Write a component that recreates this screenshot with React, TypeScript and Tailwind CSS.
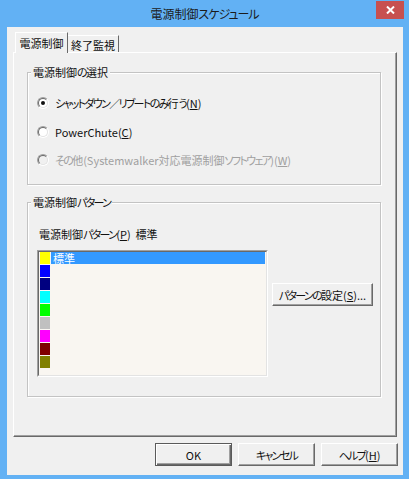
import React from "react";

function J({ t }: { t: string }) {
  const parts = t.split(/([\u3040-\u30ff\uff0f]+)/);
  return (
    <>
      {parts.map((p, i) =>
        p === "" ? null : /[\u3040-\u30ff\uff0f]/.test(p) ? (
          <span key={i} className="tracking-[-1.7px]">
            {p}
          </span>
        ) : (
          <React.Fragment key={i}>{p}</React.Fragment>
        )
      )}
    </>
  );
}

function U({ c }: { c: string }) {
  return <span className="underline underline-offset-[1px]">{c}</span>;
}

function Radio({ checked, disabled }: { checked?: boolean; disabled?: boolean }) {
  return (
    <div className="w-[12px] h-[12px] rounded-full border border-t-[#a0a0a0] border-l-[#a0a0a0] border-r-white border-b-white shrink-0">
      <div
        className={
          "w-full h-full rounded-full border border-t-[#696969] border-l-[#696969] border-r-[#e3e3e3] border-b-[#e3e3e3] flex items-center justify-center " +
          (disabled ? "bg-[#f0f0f0]" : "bg-white")
        }
      >
        {checked ? <div className="w-[4px] h-[4px] rounded-full bg-[#111111]" /> : null}
      </div>
    </div>
  );
}

function Btn({ children, def, w }: { children: React.ReactNode; def?: boolean; w: string }) {
  if (def) {
    return (
      <div className={"h-[23px] border border-[#5a5a5a] bg-[#f0f0f0] " + w}>
        <div className="w-full h-full flex items-center justify-center shadow-[inset_1px_1px_0_#ffffff,inset_-1px_-1px_0_#696969,inset_-2px_-2px_0_#a0a0a0]">
          {children}
        </div>
      </div>
    );
  }
  return (
    <div
      className={
        "h-[23px] border border-t-white border-l-white border-r-[#696969] border-b-[#696969] bg-[#f0f0f0] flex items-center justify-center shadow-[inset_-1px_-1px_0_#a0a0a0] " +
        w
      }
    >
      {children}
    </div>
  );
}

const swatches = ["#ffff00", "#0000ff", "#000080", "#00ffff", "#00ff00", "#c0c0c0", "#ff00ff", "#800000", "#808000"];

export default function App() {
  return (
    <div className="w-[409px] h-[479px] bg-[#62b1f4] flex flex-col font-['Noto_Sans_CJK_JP','Noto_Sans',sans-serif] [font-feature-settings:'palt'] text-[11px] leading-[14px] text-[#111111] select-none">
      {/* title bar */}
      <div className="h-[27px] grid grid-cols-[1fr_auto_1fr] shrink-0">
        <div />
        <div className="self-center text-[12px] leading-[16px] text-[#1b1b1b]">
          電源制御<span className="tracking-[-1px]">スケジュール</span>
        </div>
        <div className="justify-self-end self-start mt-[1px] mr-[5px] w-[28px] h-[18px] bg-[#c75050] flex items-center justify-center">
          <svg width="9" height="8" viewBox="0 0 9 8">
            <path d="M1 0.5L8 7.5M8 0.5L1 7.5" stroke="#ffffff" strokeWidth="2" />
          </svg>
        </div>
      </div>

      {/* client */}
      <div className="ml-[7px] mr-[6px] mb-[4px] flex-1 bg-[#f0f0f0] flex flex-col">
        {/* tabs */}
        <div className="mt-[5px] ml-[8px] flex items-end h-[20px]">
          <div className="relative z-10 h-[21px] -mb-[1px] w-[53px] bg-[#f0f0f0] border-t border-l border-t-white border-l-white border-r border-r-[#696969] flex items-center justify-center">
            電源制御
          </div>
          <div className="h-[17px] w-[51px] border-t border-t-white border-r border-r-[#696969] flex items-center justify-center pt-[1px]">
            終了監視
          </div>
        </div>

        {/* panel */}
        <div className="ml-[6px] w-[384px] h-[385px] border border-t-white border-l-white border-r-[#696969] border-b-[#696969] shadow-[inset_-1px_-1px_0_#a0a0a0] pl-[13px] pt-[19px] flex flex-col">
          {/* group 1 */}
          <div className="relative w-[354px] h-[113px] border border-[#c3c3c3] shadow-[1px_1px_0_#ffffff,inset_1px_1px_0_#ffffff]">
            <span className="absolute -top-[8px] left-[3px] px-[2px] bg-[#f0f0f0]">
              <J t="電源制御の選択" />
            </span>
            <div className="flex flex-col pt-[23px] pl-[9px] gap-[14.5px]">
              <div className="flex items-center h-[14px] gap-[6px]">
                <Radio checked />
                <span>
                  <J t="シャットダウン／リブートのみ行う" />(<U c="N" />)
                </span>
              </div>
              <div className="flex items-center h-[14px] gap-[6px]">
                <Radio />
                <span>
                  PowerChute(<U c="C" />)
                </span>
              </div>
              <div className="flex items-center h-[14px] gap-[6px] text-[#a0a0a0]">
                <Radio disabled />
                <span>
                  <J t="その他(Systemwalker対応電源制御ソフトウェア)" />(<U c="W" />)
                </span>
              </div>
            </div>
          </div>

          {/* group 2 */}
          <div className="relative mt-[17px] w-[354px] h-[195px] border border-[#c3c3c3] shadow-[1px_1px_0_#ffffff,inset_1px_1px_0_#ffffff] pt-[24px] pl-[9px]">
            <span className="absolute -top-[8px] left-[3px] px-[2px] bg-[#f0f0f0]">
              <J t="電源制御パターン" />
            </span>
            <div className="ml-[2px] h-[14px]">
              <J t="電源制御パターン" />(<U c="P" />)&nbsp;&nbsp;標準
            </div>
            <div className="mt-[9px] flex items-start gap-[4px]">
              <div className="w-[231px] h-[127px] border border-t-[#a0a0a0] border-l-[#a0a0a0] border-r-white border-b-white">
                <div className="w-full h-full border border-t-[#696969] border-l-[#696969] border-r-[#e3e3e3] border-b-[#e3e3e3] bg-[#f9f6f1] flex flex-col">
                  {swatches.map((c, i) => (
                    <div key={c} className="flex h-[13px] shrink-0">
                      <div className="ml-[1px] w-[10px] h-[12px]" style={{ backgroundColor: c }} />
                      {i === 0 ? (
                        <div className="ml-[1px] mr-[1px] flex-1 h-[12px] bg-[#3399ff] text-white pl-[2px] leading-[12px]">
                          標準
                        </div>
                      ) : null}
                    </div>
                  ))}
                </div>
              </div>
              <div className="mt-[33px]">
                <Btn w="w-[101px]">
                  <span>
                    <J t="パターンの設定" />(<U c="S" />)...
                  </span>
                </Btn>
              </div>
            </div>
          </div>
        </div>

        {/* bottom buttons */}
        <div className="mt-[6px] flex justify-end gap-[6px] pr-[5px]">
          <Btn def w="w-[77px]">OK</Btn>
          <Btn w="w-[77px]">
            <span>
              <J t="キャンセル" />
            </span>
          </Btn>
          <Btn w="w-[77px]">
            <span>
              <J t="ヘルプ" />(<U c="H" />)
            </span>
          </Btn>
        </div>
      </div>
    </div>
  );
}
